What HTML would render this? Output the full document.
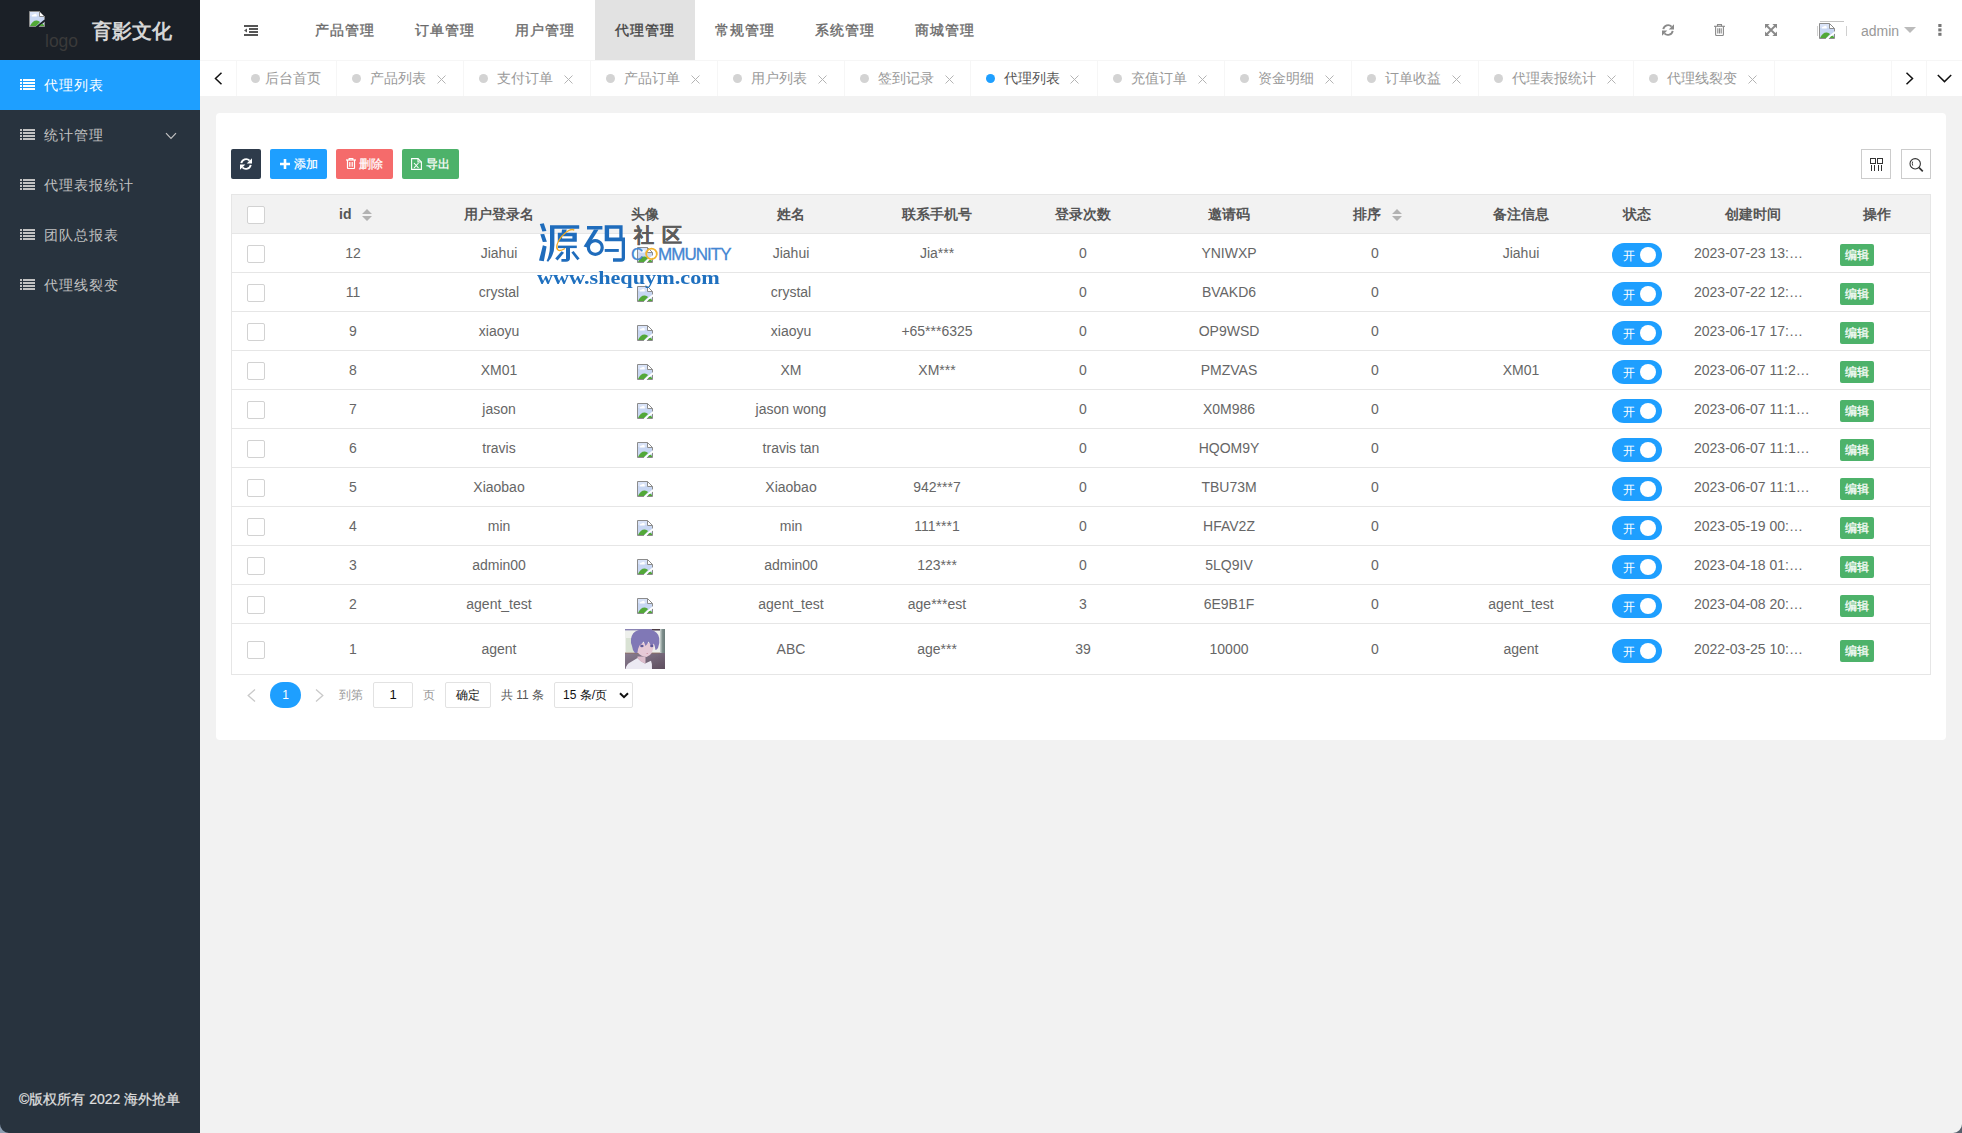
<!DOCTYPE html>
<html><head><meta charset="utf-8">
<style>
*{box-sizing:border-box;margin:0;padding:0}
html,body{width:1962px;height:1133px;overflow:hidden;background:#f2f2f2;font-family:"Liberation Sans",sans-serif;color:#666}
.abs{position:absolute}
#side{position:absolute;left:0;top:0;width:200px;height:1133px;background:#28333e}
#logo{position:absolute;left:0;top:0;width:200px;height:60px;background:#1b2027}
.mi{position:absolute;left:0;width:200px;height:50px;color:#c2c2c2;font-size:14px}
.mi.on{background:#1e9fff;color:#fff}
.mi .t{position:absolute;left:44px;top:0;line-height:50px;letter-spacing:1px}
.mi svg{position:absolute;left:20px;top:19px}
#hdr{position:absolute;left:200px;top:0;width:1762px;height:60px;background:#fff}
.nv{position:absolute;top:0;width:100px;height:60px;line-height:60px;text-align:center;font-size:14px;color:#6a6a6a;letter-spacing:1px;-webkit-text-stroke:0.35px #6a6a6a}
.nv.on{background:#e2e2e2;color:#444;-webkit-text-stroke:0.35px #444}
#tabs{position:absolute;left:200px;top:60px;width:1762px;height:36px;background:#fff;border-top:1px solid #f6f6f6}
.tb{position:absolute;top:0;height:35px;border-right:1px solid #f6f6f6;font-size:14px;color:#999;line-height:35px;white-space:nowrap}
.tb .d{position:absolute;top:13px;width:9px;height:9px;border-radius:50%;background:#d3d3d3}
.tb.on .d{background:#1e9fff}
.tb.on{color:#555}
.tb .tt{position:absolute;top:0}
.tb .x{position:absolute;top:13px}
#card{position:absolute;left:216px;top:113px;width:1730px;height:627px;background:#fff;border-radius:4px}
.btn{position:absolute;top:149px;height:30px;border-radius:2px;color:#fff;font-size:12px;line-height:30px;-webkit-text-stroke:0.25px #fff}
#tbl{position:absolute;left:231px;top:194px;width:1700px;border:1px solid #e6e6e6;border-bottom:0;background:#fff}
.tr{position:relative;display:flex;height:39px;border-bottom:1px solid #e6e6e6}
.tr.th{background:#f2f2f2}
.tr.th .c{font-weight:bold;color:#555;line-height:38px}
.c{position:relative;flex:none;height:100%;text-align:center;font-size:14px;color:#666;white-space:nowrap;line-height:38px}
.cb{position:absolute;left:15px;width:18px;height:18px;border:1px solid #d2d2d2;border-radius:2px;background:#fff}
.sw{position:absolute;left:18px;width:50px;height:24px;border-radius:20px;background:#1e9fff}
.sw i{position:absolute;left:28px;top:4px;width:16px;height:16px;border-radius:50%;background:#fff}
.sw b{position:absolute;left:10.5px;top:0.8px;line-height:24px;font-size:12px;color:#fff;font-weight:normal}
.ed{position:absolute;left:15px;width:34px;height:22px;line-height:22px;background:#4db26a;color:#fff;font-size:12px;border-radius:2px;text-align:center;-webkit-text-stroke:0.25px #fff}
</style></head>
<body>
<div id="side">
  <div id="logo">
    <svg class="abs" style="left:29px;top:11px" width="16" height="16"><use href="#brk"/></svg>
    <div class="abs" style="left:45px;top:31px;font-size:17.5px;color:#3a3a3a;line-height:20px">logo</div>
    <div class="abs" style="left:92px;top:17.5px;font-size:19.6px;font-weight:bold;color:#d6d6d6;line-height:26px">育影文化</div>
  </div>
  <div class="mi on" style="top:60px"><svg width="15" height="11"><use href="#lst"/></svg><span class="t">代理列表</span></div>
  <div class="mi" style="top:110px"><svg width="15" height="11"><use href="#lst"/></svg><span class="t">统计管理</span>
    <svg style="left:165px;top:22px" width="12" height="8" viewBox="0 0 12 8"><path d="M1 1.2 L6 6.3 L11 1.2" fill="none" stroke="#c2c2c2" stroke-width="1.2"/></svg></div>
  <div class="mi" style="top:160px"><svg width="15" height="11"><use href="#lst"/></svg><span class="t">代理表报统计</span></div>
  <div class="mi" style="top:210px"><svg width="15" height="11"><use href="#lst"/></svg><span class="t">团队总报表</span></div>
  <div class="mi" style="top:260px"><svg width="15" height="11"><use href="#lst"/></svg><span class="t">代理线裂变</span></div>
  <div class="abs" style="left:19px;top:1090px;font-size:14px;color:#e0e0e0;line-height:18px;-webkit-text-stroke:0.2px #e0e0e0">©版权所有 2022 海外抢单</div>
</div>
<svg width="0" height="0" style="position:absolute">
  <defs>
    <symbol id="lst" viewBox="0 0 15 11"><g fill="currentColor"><rect x="0" y="0" width="2" height="2"/><rect x="3" y="0" width="12" height="2"/><rect x="0" y="3" width="2" height="2"/><rect x="3" y="3" width="12" height="2"/><rect x="0" y="6" width="2" height="2"/><rect x="3" y="6" width="12" height="2"/><rect x="0" y="9" width="2" height="2"/><rect x="3" y="9" width="12" height="2"/></g></symbol>
    <symbol id="brk" viewBox="0 0 16 16"><path d="M0.5 0.5 H10.5 L15.5 5.5 V8.4 L6.9 15.5 H0.5 Z" fill="#c8d7f3"/><path d="M15.5 10.9 V15.5 H9.9 Z" fill="#c8d7f3"/><path d="M1 1 H10 V5 H1 Z" fill="#dfe8fa" opacity="0.7"/><path d="M2.5 5.4 Q3.3 3.4 5 3.6 Q5.8 2.4 7 3 Q8 3.2 7.8 5.4 Z" fill="#fff"/><path d="M0.9 15.2 Q3.5 9.4 7.8 9.6 Q9.6 9.8 11.1 11 L6.9 15.2 Z" fill="#52a838"/><path d="M10.4 15.2 Q12.2 12.6 13.6 12.8 Q14.6 13.4 15.2 14.2 V15.2 Z" fill="#52a838"/><path d="M10.5 0.5 L15.5 5.5 H10.5 Z" fill="#fff"/><g fill="none" stroke="#8c8c8c" stroke-width="1"><path d="M6.9 15.5 H0.5 V0.5 H10.5 L15.5 5.5 V8.4"/><path d="M10.5 0.5 V5.5 H15.5"/><path d="M15.5 10.9 V15.5 H9.9"/></g></symbol>
  <symbol id="photo" viewBox="0 0 40 40"><defs><linearGradient id="wall" x1="0" y1="0" x2="1" y2="1"><stop offset="0" stop-color="#8a7e92"/><stop offset="1" stop-color="#5e4e5e"/></linearGradient><linearGradient id="curt" x1="0" y1="0" x2="1" y2="0"><stop offset="0" stop-color="#cdd5d2"/><stop offset="0.5" stop-color="#7e8e8c"/><stop offset="1" stop-color="#6a7a78"/></linearGradient><filter id="sft" x="-5%" y="-5%" width="110%" height="110%"><feGaussianBlur stdDeviation="0.35"/></filter></defs><g filter="url(#sft)"><rect width="40" height="40" fill="#eef0ec"/><rect x="1" y="9" width="8" height="14" fill="#d9e2d4"/><rect x="0" y="0" width="40" height="1.4" fill="#8a84b4"/><rect x="27" y="0" width="9" height="1.4" fill="#4e3c44"/><rect x="35" y="0" width="5" height="26" fill="url(#curt)"/><rect x="0" y="24" width="40" height="16" fill="url(#wall)"/><rect x="0" y="23.6" width="35" height="0.9" fill="#8c6e62"/><path d="M0.5 40 Q1.5 35 5 33.5 L12.5 29 Q16 33 20 34.5 L26 31.8 Q27.5 35 27 40 Z" fill="#eceaf3"/><path d="M12.5 27.5 L20.5 27.5 L20.5 34.5 Q16 33.5 12.5 29 Z" fill="#dcbdcc"/><path d="M10 14 Q10.5 27 21.5 28 Q28.5 26 29 14 Z" fill="#e6c9d6"/><path d="M6 10 Q7 3 13 1.2 Q19 -0.5 26 0.8 Q33 2.5 34.2 9 Q35 14 33 19 Q31.5 21 30.5 21 Q30 17 28.8 14.5 Q27 17 26 18 Q25 14 23.5 12.5 Q22 16 20.5 17 Q19.5 13.5 18.5 12.5 Q16.5 15.5 14.5 16.5 Q13 19 12.5 23.5 Q11 25 9.5 23.5 Q7.5 21 7 17 Q5.5 14 6 10 Z" fill="#8078b6"/><ellipse cx="16.9" cy="17" rx="1.7" ry="1.3" fill="#5d5a98"/><ellipse cx="26.8" cy="17" rx="1.6" ry="1.3" fill="#5d5a98"/><ellipse cx="22.2" cy="24.4" rx="0.9" ry="0.45" fill="#c27888"/></g></symbol>
  </defs>
</svg>
<div id="hdr">
  <svg class="abs" style="left:44px;top:25px" width="14" height="11" viewBox="0 0 14 11"><g fill="#555"><rect x="0" y="0" width="14" height="2"/><rect x="5" y="3" width="9" height="2"/><rect x="5" y="6" width="9" height="2"/><rect x="0" y="9" width="14" height="2"/><path d="M0 5.5 L3 3.5 V7.5 Z"/></g></svg>
  <div class="nv" style="left:95px">产品管理</div>
  <div class="nv" style="left:195px">订单管理</div>
  <div class="nv" style="left:295px">用户管理</div>
  <div class="nv on" style="left:395px">代理管理</div>
  <div class="nv" style="left:495px">常规管理</div>
  <div class="nv" style="left:595px">系统管理</div>
  <div class="nv" style="left:695px">商城管理</div>
  <svg class="abs" style="left:1462px;top:24px" width="12" height="12" viewBox="0 0 12 12"><g fill="none" stroke="#8a8a8a" stroke-width="1.9"><path d="M1.3 5.2 A4.9 4.9 0 0 1 9.6 2.6"/><path d="M10.7 6.8 A4.9 4.9 0 0 1 2.4 9.4"/></g><g fill="#8a8a8a"><path d="M12 0.3 V5.6 H6.7 Z"/><path d="M0 11.7 V6.4 H5.3 Z"/></g></svg>
  <svg class="abs" style="left:1514px;top:24px" width="11" height="12" viewBox="0 0 11 12"><g fill="none" stroke="#8a8a8a" stroke-width="1.1"><path d="M0 2.3 H11"/><path d="M3.5 2.3 V0.6 H7.5 V2.3"/><path d="M1.6 2.3 V10.6 Q1.6 11.5 2.5 11.5 H8.5 Q9.4 11.5 9.4 10.6 V2.3"/><path d="M3.8 4.3 V9.6 M5.5 4.3 V9.6 M7.2 4.3 V9.6"/></g></svg>
  <svg class="abs" style="left:1565px;top:24px" width="12" height="12" viewBox="0 0 12 12"><g fill="#8a8a8a"><path d="M0 0 H4.6 L0 4.6 Z"/><path d="M12 0 V4.6 L7.4 0 Z"/><path d="M0 12 V7.4 L4.6 12 Z"/><path d="M12 12 H7.4 L12 7.4 Z"/></g><path d="M1.5 1.5 L10.5 10.5 M10.5 1.5 L1.5 10.5" stroke="#8a8a8a" stroke-width="1.9"/></svg>
  <div class="abs" style="left:1620px;top:21px;width:24px;height:1px;background:#c4c4c4"></div><div class="abs" style="left:1617px;top:26px;width:1px;height:10px;background:#d0d0d0"></div><div class="abs" style="left:1646px;top:26px;width:1px;height:10px;background:#d0d0d0"></div><svg class="abs" style="left:1619px;top:23px" width="16" height="16"><use href="#brk"/></svg>
  <div class="abs" style="left:1661px;top:21px;font-size:14px;color:#999;line-height:20px">admin</div>
  <svg class="abs" style="left:1704px;top:27px" width="12" height="6" viewBox="0 0 12 6"><path d="M0 0 H12 L6 6 Z" fill="#bbb"/></svg>
  <svg class="abs" style="left:1738px;top:24px" width="4" height="12" viewBox="0 0 4 12"><g fill="#777"><rect x="0.3" y="0" width="3.2" height="3"/><rect x="0.3" y="4.4" width="3.2" height="3"/><rect x="0.3" y="8.8" width="3.2" height="3"/></g></svg>
</div>
<div id="tabs">
<div class="tb" style="left:0;width:37px"><svg class="abs" style="left:14px;top:11px" width="9" height="13" viewBox="0 0 9 13"><path d="M7.5 0.8 L1.5 6.5 L7.5 12.2" fill="none" stroke="#111" stroke-width="1.5"/></svg></div>
<div class="tb" style="left:37px;width:100px"><span class="d" style="left:14px"></span><span class="tt" style="left:28px">后台首页</span></div>
<div class="tb" style="left:137px;width:127px"><span class="d" style="left:15px"></span><span class="tt" style="left:33px">产品列表</span><svg class="x" style="left:100px;top:14px" width="9" height="9" viewBox="0 0 9 9"><path d="M0.5 0.5 L8.5 8.5 M8.5 0.5 L0.5 8.5" stroke="#b4b4b4" stroke-width="1"/></svg></div>
<div class="tb" style="left:264px;width:127px"><span class="d" style="left:15px"></span><span class="tt" style="left:33px">支付订单</span><svg class="x" style="left:100px;top:14px" width="9" height="9" viewBox="0 0 9 9"><path d="M0.5 0.5 L8.5 8.5 M8.5 0.5 L0.5 8.5" stroke="#b4b4b4" stroke-width="1"/></svg></div>
<div class="tb" style="left:391px;width:127px"><span class="d" style="left:15px"></span><span class="tt" style="left:33px">产品订单</span><svg class="x" style="left:100px;top:14px" width="9" height="9" viewBox="0 0 9 9"><path d="M0.5 0.5 L8.5 8.5 M8.5 0.5 L0.5 8.5" stroke="#b4b4b4" stroke-width="1"/></svg></div>
<div class="tb" style="left:518px;width:127px"><span class="d" style="left:15px"></span><span class="tt" style="left:33px">用户列表</span><svg class="x" style="left:100px;top:14px" width="9" height="9" viewBox="0 0 9 9"><path d="M0.5 0.5 L8.5 8.5 M8.5 0.5 L0.5 8.5" stroke="#b4b4b4" stroke-width="1"/></svg></div>
<div class="tb" style="left:645px;width:126px"><span class="d" style="left:15px"></span><span class="tt" style="left:33px">签到记录</span><svg class="x" style="left:100px;top:14px" width="9" height="9" viewBox="0 0 9 9"><path d="M0.5 0.5 L8.5 8.5 M8.5 0.5 L0.5 8.5" stroke="#b4b4b4" stroke-width="1"/></svg></div>
<div class="tb on" style="left:771px;width:127px"><span class="d" style="left:15px"></span><span class="tt" style="left:33px">代理列表</span><svg class="x" style="left:99px;top:14px" width="9" height="9" viewBox="0 0 9 9"><path d="M0.5 0.5 L8.5 8.5 M8.5 0.5 L0.5 8.5" stroke="#b4b4b4" stroke-width="1"/></svg></div>
<div class="tb" style="left:898px;width:127px"><span class="d" style="left:15px"></span><span class="tt" style="left:33px">充值订单</span><svg class="x" style="left:100px;top:14px" width="9" height="9" viewBox="0 0 9 9"><path d="M0.5 0.5 L8.5 8.5 M8.5 0.5 L0.5 8.5" stroke="#b4b4b4" stroke-width="1"/></svg></div>
<div class="tb" style="left:1025px;width:127px"><span class="d" style="left:15px"></span><span class="tt" style="left:33px">资金明细</span><svg class="x" style="left:100px;top:14px" width="9" height="9" viewBox="0 0 9 9"><path d="M0.5 0.5 L8.5 8.5 M8.5 0.5 L0.5 8.5" stroke="#b4b4b4" stroke-width="1"/></svg></div>
<div class="tb" style="left:1152px;width:127px"><span class="d" style="left:15px"></span><span class="tt" style="left:33px">订单收益</span><svg class="x" style="left:100px;top:14px" width="9" height="9" viewBox="0 0 9 9"><path d="M0.5 0.5 L8.5 8.5 M8.5 0.5 L0.5 8.5" stroke="#b4b4b4" stroke-width="1"/></svg></div>
<div class="tb" style="left:1279px;width:155px"><span class="d" style="left:15px"></span><span class="tt" style="left:33px">代理表报统计</span><svg class="x" style="left:128px;top:14px" width="9" height="9" viewBox="0 0 9 9"><path d="M0.5 0.5 L8.5 8.5 M8.5 0.5 L0.5 8.5" stroke="#b4b4b4" stroke-width="1"/></svg></div>
<div class="tb" style="left:1434px;width:141px"><span class="d" style="left:15px"></span><span class="tt" style="left:33px">代理线裂变</span><svg class="x" style="left:114px;top:14px" width="9" height="9" viewBox="0 0 9 9"><path d="M0.5 0.5 L8.5 8.5 M8.5 0.5 L0.5 8.5" stroke="#b4b4b4" stroke-width="1"/></svg></div>
<div class="abs" style="left:1691px;top:0;width:35px;height:35px;border-left:1px solid #f6f6f6"><svg class="abs" style="left:13px;top:11px" width="9" height="13" viewBox="0 0 9 13"><path d="M1.5 0.8 L7.5 6.5 L1.5 12.2" fill="none" stroke="#111" stroke-width="1.5"/></svg></div>
<div class="abs" style="left:1726px;top:0;width:36px;height:35px;border-left:1px solid #f6f6f6"><svg class="abs" style="left:10px;top:13px" width="15" height="9" viewBox="0 0 15 9"><path d="M0.8 1 L7.5 7.6 L14.2 1" fill="none" stroke="#111" stroke-width="1.5"/></svg></div>
</div>
<div id="card"></div>
<div class="btn" style="left:231px;width:30px;background:#2e3b4b"><svg class="abs" style="left:9px;top:9px" width="12" height="12" viewBox="0 0 12 12"><g fill="none" stroke="#fff" stroke-width="1.9"><path d="M1.3 5.2 A4.9 4.9 0 0 1 9.6 2.6"/><path d="M10.7 6.8 A4.9 4.9 0 0 1 2.4 9.4"/></g><g fill="#fff"><path d="M12 0.3 V5.6 H6.7 Z"/><path d="M0 11.7 V6.4 H5.3 Z"/></g></svg></div>
<div class="btn" style="left:270px;width:57px;background:#1e9fff"><svg class="abs" style="left:10px;top:10px" width="10" height="10" viewBox="0 0 10 10"><path d="M5 0 V10 M0 5 H10" stroke="#fff" stroke-width="2.6"/></svg><span class="abs" style="left:24px;top:0">添加</span></div>
<div class="btn" style="left:336px;width:57px;background:#f56b6b"><svg class="abs" style="left:10px;top:9px" width="10" height="11" viewBox="0 0 10 11"><g fill="none" stroke="#fff" stroke-width="1.2"><path d="M0 2 H10"/><path d="M3.2 2 V0.6 H6.8 V2"/><path d="M1.5 2 V9.8 Q1.5 10.5 2.2 10.5 H7.8 Q8.5 10.5 8.5 9.8 V2"/><path d="M3.8 4 V8.8 M6.2 4 V8.8"/></g></svg><span class="abs" style="left:23px;top:0">删除</span></div>
<div class="btn" style="left:402px;width:57px;background:#4db26a"><svg class="abs" style="left:9px;top:9px" width="11" height="12" viewBox="0 0 11 12"><g fill="none" stroke="#fff" stroke-width="1.1"><path d="M0.6 0.6 H7 L10.4 4 V11.4 H0.6 Z"/><path d="M7 0.6 V4 H10.4"/><path d="M3 5 L7.5 10 M7.5 5 L3 10"/></g></svg><span class="abs" style="left:24px;top:0">导出</span></div>
<div class="abs" style="left:1861px;top:149px;width:30px;height:30px;border:1px solid #ccc;background:#fff"><svg class="abs" style="left:8px;top:8px" width="14" height="14" viewBox="0 0 14 14"><g fill="none" stroke="#333" stroke-width="1"><rect x="0.5" y="0.5" width="5" height="5"/><rect x="7.5" y="0.5" width="5" height="5"/><path d="M1.5 7 V13 M4.5 7 V13 M8.5 7 V13 M11.5 7 V13"/></g></svg></div>
<div class="abs" style="left:1901px;top:149px;width:30px;height:30px;border:1px solid #ccc;background:#fff"><svg class="abs" style="left:6px;top:7px" width="16" height="16" viewBox="0 0 16 16"><g fill="none" stroke="#333"><circle cx="7.2" cy="6.8" r="5.2" stroke-width="1.1"/><path d="M4.6 4.6 Q4 6.6 4.7 8.6" stroke-width="0.9"/><path d="M11 10.6 L14.8 14.3" stroke-width="1.7"/></g></svg></div>
<div id="tbl">
<div class="tr th"><div class="c" style="width:48px"><span class="cb" style="top:11px"></span></div><div class="c" style="width:146px;text-align:left;padding-left:59px">id<svg class="abs" style="left:82px;top:14px" width="10" height="12" viewBox="0 0 10 12"><path d="M5 0 L10 5 H0 Z M5 12 L10 7 H0 Z" fill="#b2b2b2"/></svg></div><div class="c" style="width:146px">用户登录名</div><div class="c" style="width:146px">头像</div><div class="c" style="width:146px">姓名</div><div class="c" style="width:146px">联系手机号</div><div class="c" style="width:146px">登录次数</div><div class="c" style="width:146px">邀请码</div><div class="c" style="width:146px;text-align:left;padding-left:51px">排序<svg class="abs" style="left:90px;top:14px" width="10" height="12" viewBox="0 0 10 12"><path d="M5 0 L10 5 H0 Z M5 12 L10 7 H0 Z" fill="#b2b2b2"/></svg></div><div class="c" style="width:146px">备注信息</div><div class="c" style="width:86px">状态</div><div class="c" style="width:145px">创建时间</div><div class="c" style="width:104px">操作</div></div>
<div class="tr" style="height:39px"><div class="c" style="width:48px"><span class="cb" style="top:11px"></span></div><div class="c" style="width:146px;line-height:38px">12</div><div class="c" style="width:146px;line-height:38px">Jiahui</div><div class="c" style="width:146px;line-height:38px"><svg class="abs" style="left:65px;top:13px" width="16" height="16"><use href="#brk"/></svg></div><div class="c" style="width:146px;line-height:38px">Jiahui</div><div class="c" style="width:146px;line-height:38px">Jia***</div><div class="c" style="width:146px;line-height:38px">0</div><div class="c" style="width:146px;line-height:38px">YNIWXP</div><div class="c" style="width:146px;line-height:38px">0</div><div class="c" style="width:146px;line-height:38px">Jiahui</div><div class="c" style="width:86px"><span class="sw" style="top:9px"><b>开</b><i></i></span></div><div class="c" style="width:145px;line-height:38px;text-align:left;padding-left:14px">2023-07-23 13:…</div><div class="c" style="width:104px"><span class="ed" style="top:10px">编辑</span></div></div>
<div class="tr" style="height:39px"><div class="c" style="width:48px"><span class="cb" style="top:11px"></span></div><div class="c" style="width:146px;line-height:38px">11</div><div class="c" style="width:146px;line-height:38px">crystal</div><div class="c" style="width:146px;line-height:38px"><svg class="abs" style="left:65px;top:13px" width="16" height="16"><use href="#brk"/></svg></div><div class="c" style="width:146px;line-height:38px">crystal</div><div class="c" style="width:146px;line-height:38px"></div><div class="c" style="width:146px;line-height:38px">0</div><div class="c" style="width:146px;line-height:38px">BVAKD6</div><div class="c" style="width:146px;line-height:38px">0</div><div class="c" style="width:146px;line-height:38px"></div><div class="c" style="width:86px"><span class="sw" style="top:9px"><b>开</b><i></i></span></div><div class="c" style="width:145px;line-height:38px;text-align:left;padding-left:14px">2023-07-22 12:…</div><div class="c" style="width:104px"><span class="ed" style="top:10px">编辑</span></div></div>
<div class="tr" style="height:39px"><div class="c" style="width:48px"><span class="cb" style="top:11px"></span></div><div class="c" style="width:146px;line-height:38px">9</div><div class="c" style="width:146px;line-height:38px">xiaoyu</div><div class="c" style="width:146px;line-height:38px"><svg class="abs" style="left:65px;top:13px" width="16" height="16"><use href="#brk"/></svg></div><div class="c" style="width:146px;line-height:38px">xiaoyu</div><div class="c" style="width:146px;line-height:38px">+65***6325</div><div class="c" style="width:146px;line-height:38px">0</div><div class="c" style="width:146px;line-height:38px">OP9WSD</div><div class="c" style="width:146px;line-height:38px">0</div><div class="c" style="width:146px;line-height:38px"></div><div class="c" style="width:86px"><span class="sw" style="top:9px"><b>开</b><i></i></span></div><div class="c" style="width:145px;line-height:38px;text-align:left;padding-left:14px">2023-06-17 17:…</div><div class="c" style="width:104px"><span class="ed" style="top:10px">编辑</span></div></div>
<div class="tr" style="height:39px"><div class="c" style="width:48px"><span class="cb" style="top:11px"></span></div><div class="c" style="width:146px;line-height:38px">8</div><div class="c" style="width:146px;line-height:38px">XM01</div><div class="c" style="width:146px;line-height:38px"><svg class="abs" style="left:65px;top:13px" width="16" height="16"><use href="#brk"/></svg></div><div class="c" style="width:146px;line-height:38px">XM</div><div class="c" style="width:146px;line-height:38px">XM***</div><div class="c" style="width:146px;line-height:38px">0</div><div class="c" style="width:146px;line-height:38px">PMZVAS</div><div class="c" style="width:146px;line-height:38px">0</div><div class="c" style="width:146px;line-height:38px">XM01</div><div class="c" style="width:86px"><span class="sw" style="top:9px"><b>开</b><i></i></span></div><div class="c" style="width:145px;line-height:38px;text-align:left;padding-left:14px">2023-06-07 11:2…</div><div class="c" style="width:104px"><span class="ed" style="top:10px">编辑</span></div></div>
<div class="tr" style="height:39px"><div class="c" style="width:48px"><span class="cb" style="top:11px"></span></div><div class="c" style="width:146px;line-height:38px">7</div><div class="c" style="width:146px;line-height:38px">jason</div><div class="c" style="width:146px;line-height:38px"><svg class="abs" style="left:65px;top:13px" width="16" height="16"><use href="#brk"/></svg></div><div class="c" style="width:146px;line-height:38px">jason wong</div><div class="c" style="width:146px;line-height:38px"></div><div class="c" style="width:146px;line-height:38px">0</div><div class="c" style="width:146px;line-height:38px">X0M986</div><div class="c" style="width:146px;line-height:38px">0</div><div class="c" style="width:146px;line-height:38px"></div><div class="c" style="width:86px"><span class="sw" style="top:9px"><b>开</b><i></i></span></div><div class="c" style="width:145px;line-height:38px;text-align:left;padding-left:14px">2023-06-07 11:1…</div><div class="c" style="width:104px"><span class="ed" style="top:10px">编辑</span></div></div>
<div class="tr" style="height:39px"><div class="c" style="width:48px"><span class="cb" style="top:11px"></span></div><div class="c" style="width:146px;line-height:38px">6</div><div class="c" style="width:146px;line-height:38px">travis</div><div class="c" style="width:146px;line-height:38px"><svg class="abs" style="left:65px;top:13px" width="16" height="16"><use href="#brk"/></svg></div><div class="c" style="width:146px;line-height:38px">travis tan</div><div class="c" style="width:146px;line-height:38px"></div><div class="c" style="width:146px;line-height:38px">0</div><div class="c" style="width:146px;line-height:38px">HQOM9Y</div><div class="c" style="width:146px;line-height:38px">0</div><div class="c" style="width:146px;line-height:38px"></div><div class="c" style="width:86px"><span class="sw" style="top:9px"><b>开</b><i></i></span></div><div class="c" style="width:145px;line-height:38px;text-align:left;padding-left:14px">2023-06-07 11:1…</div><div class="c" style="width:104px"><span class="ed" style="top:10px">编辑</span></div></div>
<div class="tr" style="height:39px"><div class="c" style="width:48px"><span class="cb" style="top:11px"></span></div><div class="c" style="width:146px;line-height:38px">5</div><div class="c" style="width:146px;line-height:38px">Xiaobao</div><div class="c" style="width:146px;line-height:38px"><svg class="abs" style="left:65px;top:13px" width="16" height="16"><use href="#brk"/></svg></div><div class="c" style="width:146px;line-height:38px">Xiaobao</div><div class="c" style="width:146px;line-height:38px">942***7</div><div class="c" style="width:146px;line-height:38px">0</div><div class="c" style="width:146px;line-height:38px">TBU73M</div><div class="c" style="width:146px;line-height:38px">0</div><div class="c" style="width:146px;line-height:38px"></div><div class="c" style="width:86px"><span class="sw" style="top:9px"><b>开</b><i></i></span></div><div class="c" style="width:145px;line-height:38px;text-align:left;padding-left:14px">2023-06-07 11:1…</div><div class="c" style="width:104px"><span class="ed" style="top:10px">编辑</span></div></div>
<div class="tr" style="height:39px"><div class="c" style="width:48px"><span class="cb" style="top:11px"></span></div><div class="c" style="width:146px;line-height:38px">4</div><div class="c" style="width:146px;line-height:38px">min</div><div class="c" style="width:146px;line-height:38px"><svg class="abs" style="left:65px;top:13px" width="16" height="16"><use href="#brk"/></svg></div><div class="c" style="width:146px;line-height:38px">min</div><div class="c" style="width:146px;line-height:38px">111***1</div><div class="c" style="width:146px;line-height:38px">0</div><div class="c" style="width:146px;line-height:38px">HFAV2Z</div><div class="c" style="width:146px;line-height:38px">0</div><div class="c" style="width:146px;line-height:38px"></div><div class="c" style="width:86px"><span class="sw" style="top:9px"><b>开</b><i></i></span></div><div class="c" style="width:145px;line-height:38px;text-align:left;padding-left:14px">2023-05-19 00:…</div><div class="c" style="width:104px"><span class="ed" style="top:10px">编辑</span></div></div>
<div class="tr" style="height:39px"><div class="c" style="width:48px"><span class="cb" style="top:11px"></span></div><div class="c" style="width:146px;line-height:38px">3</div><div class="c" style="width:146px;line-height:38px">admin00</div><div class="c" style="width:146px;line-height:38px"><svg class="abs" style="left:65px;top:13px" width="16" height="16"><use href="#brk"/></svg></div><div class="c" style="width:146px;line-height:38px">admin00</div><div class="c" style="width:146px;line-height:38px">123***</div><div class="c" style="width:146px;line-height:38px">0</div><div class="c" style="width:146px;line-height:38px">5LQ9IV</div><div class="c" style="width:146px;line-height:38px">0</div><div class="c" style="width:146px;line-height:38px"></div><div class="c" style="width:86px"><span class="sw" style="top:9px"><b>开</b><i></i></span></div><div class="c" style="width:145px;line-height:38px;text-align:left;padding-left:14px">2023-04-18 01:…</div><div class="c" style="width:104px"><span class="ed" style="top:10px">编辑</span></div></div>
<div class="tr" style="height:39px"><div class="c" style="width:48px"><span class="cb" style="top:11px"></span></div><div class="c" style="width:146px;line-height:38px">2</div><div class="c" style="width:146px;line-height:38px">agent_test</div><div class="c" style="width:146px;line-height:38px"><svg class="abs" style="left:65px;top:13px" width="16" height="16"><use href="#brk"/></svg></div><div class="c" style="width:146px;line-height:38px">agent_test</div><div class="c" style="width:146px;line-height:38px">age***est</div><div class="c" style="width:146px;line-height:38px">3</div><div class="c" style="width:146px;line-height:38px">6E9B1F</div><div class="c" style="width:146px;line-height:38px">0</div><div class="c" style="width:146px;line-height:38px">agent_test</div><div class="c" style="width:86px"><span class="sw" style="top:9px"><b>开</b><i></i></span></div><div class="c" style="width:145px;line-height:38px;text-align:left;padding-left:14px">2023-04-08 20:…</div><div class="c" style="width:104px"><span class="ed" style="top:10px">编辑</span></div></div>
<div class="tr" style="height:51px"><div class="c" style="width:48px"><span class="cb" style="top:17px"></span></div><div class="c" style="width:146px;line-height:50px">1</div><div class="c" style="width:146px;line-height:50px">agent</div><div class="c" style="width:146px;line-height:50px"><svg class="abs" style="left:53px;top:5px" width="40" height="40"><use href="#photo"/></svg></div><div class="c" style="width:146px;line-height:50px">ABC</div><div class="c" style="width:146px;line-height:50px">age***</div><div class="c" style="width:146px;line-height:50px">39</div><div class="c" style="width:146px;line-height:50px">10000</div><div class="c" style="width:146px;line-height:50px">0</div><div class="c" style="width:146px;line-height:50px">agent</div><div class="c" style="width:86px"><span class="sw" style="top:15px"><b>开</b><i></i></span></div><div class="c" style="width:145px;line-height:50px;text-align:left;padding-left:14px">2022-03-25 10:…</div><div class="c" style="width:104px"><span class="ed" style="top:16px">编辑</span></div></div>
</div>
<div id="pg">
<svg class="abs" style="left:247px;top:689px" width="9" height="13" viewBox="0 0 9 13"><path d="M8 0.6 L1.2 6.5 L8 12.4" fill="none" stroke="#c9c9c9" stroke-width="1.3"/></svg>
<div class="abs" style="left:270px;top:682px;width:31px;height:26px;border-radius:13px;background:#1e9fff;color:#fff;font-size:12px;line-height:26px;text-align:center">1</div>
<svg class="abs" style="left:315px;top:689px" width="9" height="13" viewBox="0 0 9 13"><path d="M1 0.6 L7.8 6.5 L1 12.4" fill="none" stroke="#c9c9c9" stroke-width="1.3"/></svg>
<div class="abs" style="left:339px;top:682px;font-size:12px;line-height:26px;color:#999">到第</div>
<div class="abs" style="left:373px;top:682px;width:40px;height:26px;border:1px solid #e2e2e2;border-radius:2px;font-size:13px;line-height:24px;text-align:center;color:#111">1</div>
<div class="abs" style="left:423px;top:682px;font-size:12px;line-height:26px;color:#999">页</div>
<div class="abs" style="left:445px;top:682px;width:46px;height:26px;border:1px solid #e2e2e2;border-radius:2px;font-size:12px;line-height:25px;text-align:center;color:#222">确定</div>
<div class="abs" style="left:501px;top:682px;font-size:12px;line-height:26px;color:#555;word-spacing:0px">共 11 条</div>
<div class="abs" style="left:554px;top:682px;width:79px;height:26px;border:1px solid #e2e2e2;border-radius:2px;background:#fff"><span class="abs" style="left:8px;top:0;font-size:12px;line-height:24px;color:#111">15 条/页</span><svg class="abs" style="left:64px;top:9px" width="10" height="7" viewBox="0 0 10 7"><path d="M1 1.2 L5 5.2 L9 1.2" fill="none" stroke="#111" stroke-width="2"/></svg></div>
</div>
<div id="wm">
<svg class="abs" style="left:535px;top:218px" width="95" height="48" viewBox="0 0 95 48"><g fill="#1f6cbc">
<path d="M4.8 6.1 L8.8 5.3 L11.4 13.1 L7.4 13.4 Z"/>
<path d="M5.3 16.2 L9.2 16 L11.9 23.7 L7.8 24 Z"/>
<path d="M4 42.6 L8.8 43.2 L11.6 28.6 L7.9 27.2 Z"/>
<path d="M15 7.3 H44.2 V10.8 H19.4 V27 Q19.4 37 13.2 43.8 L11.6 42.9 Q15 36 15 27 Z"/>
<path d="M22.8 14.8 H41.8 V23.8 H22.8 Z M27.1 18.2 V20.6 H37.4 V18.2 Z"/>
<path d="M27 11.4 H31.8 L30.8 14.9 H26.6 Z"/>
<path d="M22.8 27.6 H41.8 V30.1 H22.8 Z"/>
<path d="M31 30 H35 V40 Q35 43.8 31 43.8 H26.4 V41 H31 Z"/>
<path d="M20.2 40.4 L26.6 33.2 L29 34.8 L22.6 42.4 Z"/>
<path d="M36.4 34.6 L38.6 33 L44.6 40.6 L42.4 42.2 Z"/>
<path d="M52 8 H67.4 V11.5 H52 Z"/>
<path d="M59 11.4 L63.6 11.4 L52.2 29.6 L48.6 28.6 Z"/>
<path fill-rule="evenodd" d="M60.3 21 A8.5 8.5 0 1 1 60.29 21 Z M60.3 24.2 A5.3 5.3 0 1 0 60.31 24.2 Z"/>
<path d="M69.7 7.3 H87.6 V19.4 H90 V40 Q90 43.8 86 43.8 H78 V40.2 H86.7 V23.2 H69.7 V19.4 H84.3 V10.8 H74.1 V19.4 H69.7 Z"/>
<path d="M69.7 31 H83.8 V33.9 H69.7 Z"/>
</g><ellipse cx="31" cy="22" rx="12.8" ry="5.6" transform="rotate(-50 31 22)" fill="none" stroke="#f5a81c" stroke-width="1.3" stroke-dasharray="40 100" stroke-dashoffset="-22"/></svg>
<div class="abs" style="left:633.5px;top:222px;font-size:20px;line-height:26px;font-weight:bold;color:#5c5c5c;letter-spacing:8px;-webkit-text-stroke:0.3px #5c5c5c">社区</div>
<div class="abs" style="left:631px;top:245px;font-size:17px;line-height:20px;color:#4486d2;-webkit-text-stroke:0.3px #4486d2">C</div><div class="abs" style="left:658px;top:245px;font-size:17px;line-height:20px;color:#4486d2;letter-spacing:-0.95px;-webkit-text-stroke:0.3px #4486d2">MMUNITY</div>
<svg class="abs" style="left:640px;top:244px" width="22" height="20" viewBox="0 0 22 20"><circle cx="11.5" cy="9.9" r="5.3" fill="none" stroke="#f5b52e" stroke-width="1.8"/></svg>

<div class="abs" style="left:537px;top:265px;font-family:'Liberation Serif',serif;font-size:19px;line-height:26px;font-weight:bold;color:#1f70bf;transform:scaleX(1.17);transform-origin:0 0">www.shequym.com</div>
</div>
<svg class="abs" style="left:0;top:1124px" width="9" height="9" viewBox="0 0 9 9"><path d="M0 0 A9 9 0 0 0 9 9 H0 Z" fill="#8e9fb2"/></svg>
<svg class="abs" style="left:1953px;top:1124px" width="9" height="9" viewBox="0 0 9 9"><path d="M9 0 A9 9 0 0 1 0 9 H9 Z" fill="#56606c"/></svg>
</body></html>
